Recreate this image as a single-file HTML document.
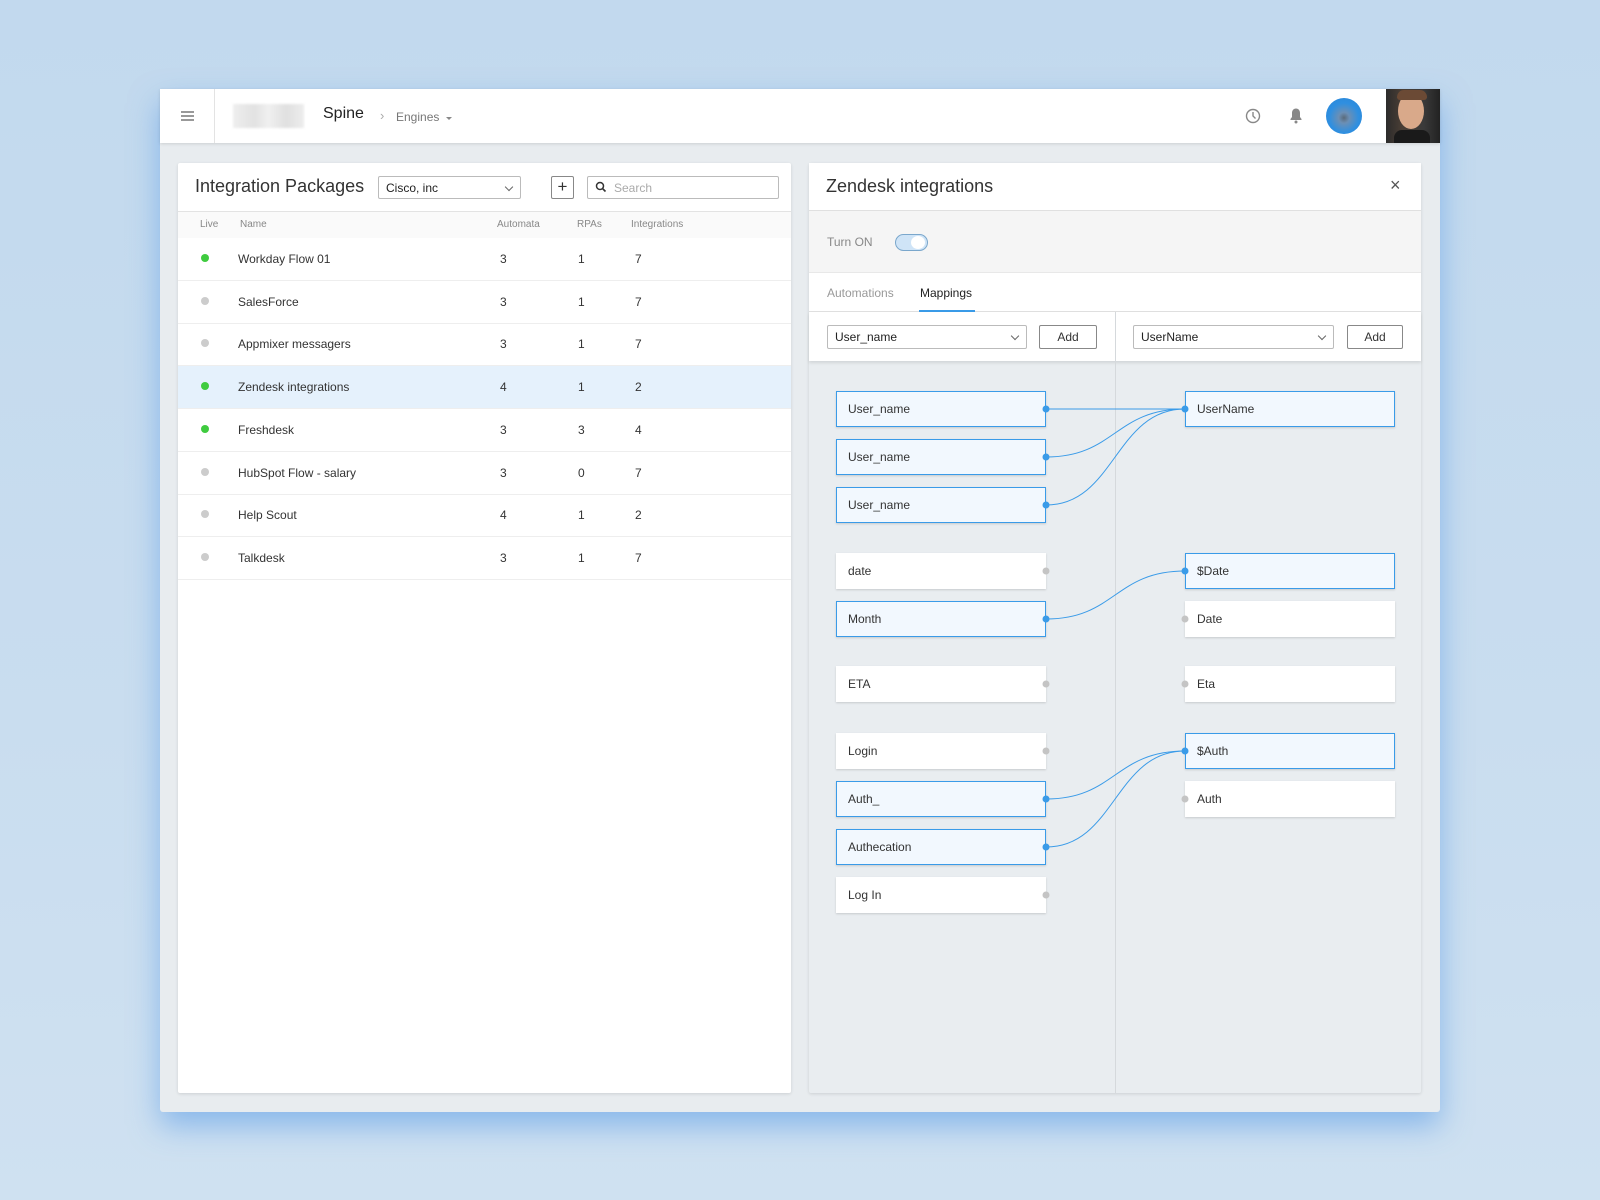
<!DOCTYPE html>
<html><head><meta charset="utf-8"><style>
*{box-sizing:border-box;margin:0;padding:0}
body{width:1600px;height:1200px;background:linear-gradient(180deg,#c2d9ee,#c9ddef 60%,#cfe1f1);font-family:"Liberation Sans",sans-serif;position:relative;overflow:hidden;color:#333}
.a{position:absolute}
.win{left:160px;top:89px;width:1280px;height:1023px;background:#e8ecef;box-shadow:0 14px 30px rgba(80,150,230,.55);border-radius:3px;overflow:hidden}
.hdr{left:160px;top:89px;width:1280px;height:54px;background:#fff;box-shadow:0 1px 3px rgba(0,0,0,.12)}
.card{background:#fff;box-shadow:0 1px 3px rgba(0,0,0,.12);border-radius:2px}
.sel{border:1px solid #bbb;border-radius:2px;background:#fff;font-size:12px;color:#222;padding-left:7px;line-height:22px}
.chev{position:absolute;right:8px;top:7px;width:6px;height:6px;border-right:1.2px solid #666;border-bottom:1.2px solid #666;transform:rotate(45deg)}
.btn{border:1px solid #888;border-radius:2px;background:#fff;font-size:12px;text-align:center;line-height:22px;color:#333}
.row{position:absolute;left:178px;width:613px;height:43px;border-bottom:1px solid #eee}
.row .d{position:absolute;left:23px;top:16px;width:8px;height:8px;border-radius:50%;background:#ccc}
.row .d.g{background:#3fcb3f}
.row span{position:absolute;top:14px;font-size:12px;color:#333}
.box{position:absolute;width:210px;height:36px;background:#fff;box-shadow:0 1px 2px rgba(0,0,0,.15);font-size:12px;color:#333;padding-left:12px;line-height:36px}
.box.s{background:#f2f8fe;border:1px solid #3a9be8;line-height:34px;padding-left:11px}
</style></head><body>
<div class="a win"></div>
<div class="a hdr"></div>
<div class="a" style="left:181px;top:111px;width:13px;height:2px;background:#999;box-shadow:0 4px 0 #999,0 8px 0 #999"></div>
<div class="a" style="left:214px;top:89px;width:1px;height:54px;background:#e3e3e3"></div>
<div class="a" style="left:233px;top:104px;width:71px;height:24px;background:linear-gradient(90deg,#eee,#e2e2e2 30%,#f0f0f0 50%,#e0e0e0 75%,#ededed);filter:blur(1px)"></div>
<div class="a" style="left:323px;top:105px;font-size:16px;color:#222">Spine</div>
<div class="a" style="left:380px;top:108px;font-size:13px;color:#aaa">›</div>
<div class="a" style="left:396px;top:110px;font-size:12px;color:#777">Engines</div>
<div class="a" style="left:446px;top:117px;border-left:3px solid transparent;border-right:3px solid transparent;border-top:3px solid #888"></div>
<svg class="a" style="left:1245px;top:108px" width="16" height="16"><circle cx="8" cy="8" r="6.5" fill="none" stroke="#888" stroke-width="1.4"/><path d="M8 4v4l2.5 2.5" fill="none" stroke="#888" stroke-width="1.4"/></svg>
<svg class="a" style="left:1289px;top:107px" width="14" height="17"><path d="M7 1.5c-2.5 0-4 2-4 4.5v4L1.5 12v1h11v-1L11 10V6c0-2.5-1.5-4.5-4-4.5z" fill="#888"/><circle cx="7" cy="15" r="1.5" fill="#888"/></svg>
<div class="a" style="left:1326px;top:98px;width:36px;height:36px;border-radius:50%;background:radial-gradient(circle at 50% 55%,#5a6a7a 0,#6b8fb5 20%,#2f8fe0 55%,#2785d8)"></div>
<div class="a" style="left:1386px;top:89px;width:54px;height:54px;background:linear-gradient(90deg,#2b2b2b,#4a3e35 30%,#3a3a3a 70%,#222)"></div>
<div class="a" style="left:1398px;top:93px;width:26px;height:36px;border-radius:50%;background:#d9a98a"></div>
<div class="a" style="left:1394px;top:130px;width:36px;height:13px;background:#1a1a1a;border-radius:8px 8px 0 0"></div>
<div class="a" style="left:1397px;top:90px;width:30px;height:10px;background:#6b4a35;border-radius:10px 10px 4px 4px"></div>

<div class="a card" style="left:178px;top:163px;width:613px;height:930px"></div>
<div class="a" style="left:195px;top:176px;font-size:18px;color:#333">Integration Packages</div>
<div class="a sel" style="left:378px;top:176px;width:143px;height:23px">Cisco, inc<div class="chev"></div></div>
<div class="a btn" style="left:551px;top:176px;width:23px;height:23px;font-size:17px;line-height:20px">+</div>
<div class="a sel" style="left:587px;top:176px;width:192px;height:23px;padding-left:26px;color:#aaa">Search</div>
<svg class="a" style="left:595px;top:181px" width="12" height="12"><circle cx="5" cy="5" r="3.5" fill="none" stroke="#333" stroke-width="1.5"/><path d="M7.5 7.5l3 3" stroke="#333" stroke-width="1.6"/></svg>
<div class="a" style="left:178px;top:211px;width:613px;height:27px;background:#fafafa;border-top:1px solid #e3e3e3"></div>
<div class="a" style="left:200px;top:219px;font-size:10px;color:#888">Live</div>
<div class="a" style="left:240px;top:219px;font-size:10px;color:#888">Name</div>
<div class="a" style="left:497px;top:219px;font-size:10px;color:#888">Automata</div>
<div class="a" style="left:577px;top:219px;font-size:10px;color:#888">RPAs</div>
<div class="a" style="left:631px;top:219px;font-size:10px;color:#888">Integrations</div>
<div class="row" style="top:238px"><div class="d g"></div><span style="left:60px">Workday Flow 01</span><span style="left:322px">3</span><span style="left:400px">1</span><span style="left:457px">7</span></div>
<div class="row" style="top:281px"><div class="d"></div><span style="left:60px">SalesForce</span><span style="left:322px">3</span><span style="left:400px">1</span><span style="left:457px">7</span></div>
<div class="row" style="top:323px"><div class="d"></div><span style="left:60px">Appmixer messagers</span><span style="left:322px">3</span><span style="left:400px">1</span><span style="left:457px">7</span></div>
<div class="row" style="top:366px;background:#e5f1fc"><div class="d g"></div><span style="left:60px">Zendesk integrations</span><span style="left:322px">4</span><span style="left:400px">1</span><span style="left:457px">2</span></div>
<div class="row" style="top:409px"><div class="d g"></div><span style="left:60px">Freshdesk</span><span style="left:322px">3</span><span style="left:400px">3</span><span style="left:457px">4</span></div>
<div class="row" style="top:452px"><div class="d"></div><span style="left:60px">HubSpot Flow - salary</span><span style="left:322px">3</span><span style="left:400px">0</span><span style="left:457px">7</span></div>
<div class="row" style="top:494px"><div class="d"></div><span style="left:60px">Help Scout</span><span style="left:322px">4</span><span style="left:400px">1</span><span style="left:457px">2</span></div>
<div class="row" style="top:537px"><div class="d"></div><span style="left:60px">Talkdesk</span><span style="left:322px">3</span><span style="left:400px">1</span><span style="left:457px">7</span></div>

<div class="a card" style="left:809px;top:163px;width:612px;height:930px;background:#e9edf0"></div>
<div class="a" style="left:809px;top:163px;width:612px;height:48px;background:#fff;border-bottom:1px solid #e0e0e0"></div>
<div class="a" style="left:826px;top:176px;font-size:18px;color:#333">Zendesk integrations</div>
<div class="a" style="left:1390px;top:175px;font-size:18px;color:#555">×</div>
<div class="a" style="left:809px;top:211px;width:612px;height:62px;background:#f5f5f5;border-bottom:1px solid #e8e8e8"></div>
<div class="a" style="left:827px;top:235px;font-size:12px;color:#888">Turn ON</div>
<div class="a" style="left:895px;top:234px;width:33px;height:17px;border-radius:9px;background:#cfe4f7;border:1px solid #7aa7cc"></div>
<div class="a" style="left:911px;top:236px;width:14px;height:13px;border-radius:50%;background:#fff"></div>
<div class="a" style="left:809px;top:273px;width:612px;height:39px;background:#fff;border-bottom:1px solid #e0e0e0"></div>
<div class="a" style="left:827px;top:286px;font-size:12px;color:#999">Automations</div>
<div class="a" style="left:920px;top:286px;font-size:12px;color:#222">Mappings</div>
<div class="a" style="left:919px;top:310px;width:56px;height:2px;background:#3a9be8"></div>
<div class="a" style="left:809px;top:312px;width:612px;height:49px;background:#fff;box-shadow:0 2px 3px rgba(0,0,0,.1)"></div>
<div class="a" style="left:1115px;top:312px;width:1px;height:781px;background:#d5d9dc"></div>
<div class="a sel" style="left:827px;top:325px;width:200px;height:24px">User_name<div class="chev"></div></div>
<div class="a btn" style="left:1039px;top:325px;width:58px;height:24px">Add</div>
<div class="a sel" style="left:1133px;top:325px;width:201px;height:24px">UserName<div class="chev"></div></div>
<div class="a btn" style="left:1347px;top:325px;width:56px;height:24px">Add</div>

<div class="box s" style="left:836px;top:391px">User_name</div>
<div class="box s" style="left:836px;top:439px">User_name</div>
<div class="box s" style="left:836px;top:487px">User_name</div>
<div class="box" style="left:836px;top:553px">date</div>
<div class="box s" style="left:836px;top:601px">Month</div>
<div class="box" style="left:836px;top:666px">ETA</div>
<div class="box" style="left:836px;top:733px">Login</div>
<div class="box s" style="left:836px;top:781px">Auth_</div>
<div class="box s" style="left:836px;top:829px">Authecation</div>
<div class="box" style="left:836px;top:877px">Log In</div>
<div class="box s" style="left:1185px;top:391px">UserName</div>
<div class="box s" style="left:1185px;top:553px">$Date</div>
<div class="box" style="left:1185px;top:601px">Date</div>
<div class="box" style="left:1185px;top:666px">Eta</div>
<div class="box s" style="left:1185px;top:733px">$Auth</div>
<div class="box" style="left:1185px;top:781px">Auth</div>

<svg class="a" style="left:0;top:0" width="1600" height="1200">
<g fill="none" stroke="#3a9be8" stroke-width="1">
<path d="M1046 409H1185"/>
<path d="M1046 457C1115 457 1115 409 1185 409"/>
<path d="M1046 505C1115 505 1115 409 1185 409"/>
<path d="M1046 619C1115 619 1115 571 1185 571"/>
<path d="M1046 799C1115 799 1115 751 1185 751"/>
<path d="M1046 847C1115 847 1115 751 1185 751"/>
</g>
<g fill="#3a9be8">
<circle cx="1046" cy="409" r="3.5"/><circle cx="1046" cy="457" r="3.5"/><circle cx="1046" cy="505" r="3.5"/><circle cx="1046" cy="619" r="3.5"/><circle cx="1046" cy="799" r="3.5"/><circle cx="1046" cy="847" r="3.5"/>
<circle cx="1185" cy="409" r="3.5"/><circle cx="1185" cy="571" r="3.5"/><circle cx="1185" cy="751" r="3.5"/>
</g>
<g fill="#c4c4c4">
<circle cx="1046" cy="571" r="3.5"/><circle cx="1046" cy="684" r="3.5"/><circle cx="1046" cy="751" r="3.5"/><circle cx="1046" cy="895" r="3.5"/>
<circle cx="1185" cy="619" r="3.5"/><circle cx="1185" cy="684" r="3.5"/><circle cx="1185" cy="799" r="3.5"/>
</g>
</svg>
</body></html>
